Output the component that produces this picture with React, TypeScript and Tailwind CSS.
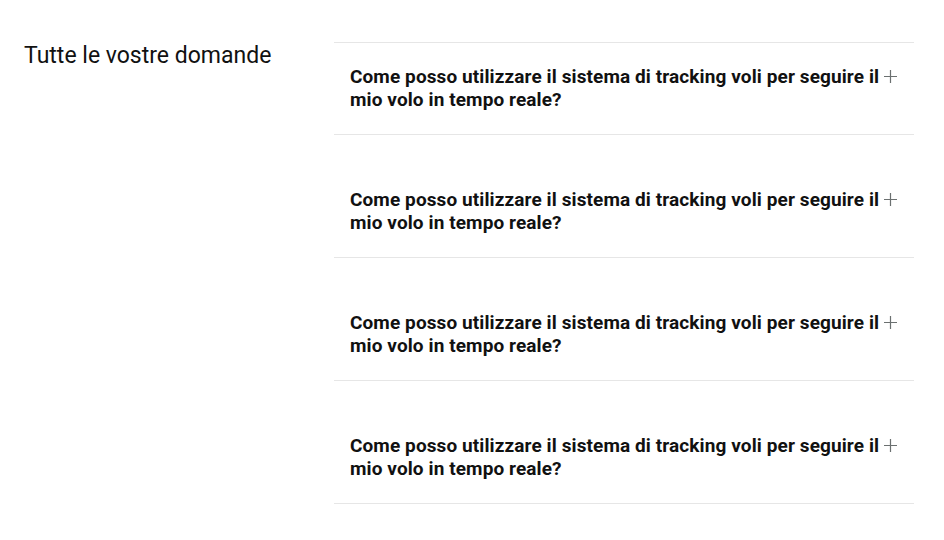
import React from 'react';

const questions = [
  'Come posso utilizzare il sistema di tracking voli per seguire il mio volo in tempo reale?',
  'Come posso utilizzare il sistema di tracking voli per seguire il mio volo in tempo reale?',
  'Come posso utilizzare il sistema di tracking voli per seguire il mio volo in tempo reale?',
  'Come posso utilizzare il sistema di tracking voli per seguire il mio volo in tempo reale?',
];

const PlusIcon = () => (
  <svg width="15" height="15" viewBox="0 0 15 15" className="shrink-0 mt-[4px] text-[#6b7070]">
    <path d="M7.5 1v13M1 7.5h13" stroke="currentColor" strokeWidth="1.2" fill="none" />
  </svg>
);

export default function App() {
  return (
    <div className="min-h-[540px] bg-white font-['Roboto',sans-serif] text-[#111]">
      <div className="flex pt-[42px] pl-[24px] pr-[30px]">
        <h2 className="w-[310px] shrink-0 text-[23px] leading-[28px] text-[#111]">
          Tutte le vostre domande
        </h2>
        <div className="flex-1 min-w-0 border-t border-[#e6e6e6]">
          {questions.map((q, i) => (
            <div
              key={i}
              className={`flex items-start gap-[2px] px-[16px] pb-[23px] border-b border-[#e6e6e6] ${i === 0 ? 'pt-[22px]' : 'pt-[53px]'}`}
            >
              <p className="w-[531px] shrink-0 text-[19px] leading-[23px] font-bold tracking-[0.1px]">{q}</p>
              <PlusIcon />
            </div>
          ))}
        </div>
      </div>
    </div>
  );
}
